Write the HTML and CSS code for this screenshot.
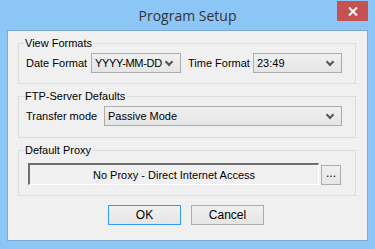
FILE: index.html
```html
<!DOCTYPE html>
<html lang="en">
<head>
  <meta charset="UTF-8">
  <title>Program Setup</title>
  <link rel="stylesheet" href="styles.css">
</head>
<body>
  <div class="window">
    <div class="titlebar">
      <span class="title">Program Setup</span>
      <button class="close" aria-label="Close">
        <svg width="10" height="9" viewBox="0 0 10 9"><path d="M1 0.5 L9 8.5 M9 0.5 L1 8.5" stroke="#fff" stroke-width="2"/></svg>
      </button>
    </div>

    <div class="client">
      <fieldset class="group g-view">
        <legend>View Formats</legend>
        <div class="row">
          <label class="lbl lbl-date">Date Format</label>
          <div class="combo w-date"><span>YYYY-MM-DD</span><i class="chev"></i></div>
          <label class="lbl lbl-time">Time Format</label>
          <div class="combo w-time"><span>23:49</span><i class="chev"></i></div>
        </div>
      </fieldset>

      <fieldset class="group g-ftp">
        <legend>FTP-Server Defaults</legend>
        <div class="row">
          <label class="lbl lbl-mode">Transfer mode</label>
          <div class="combo w-mode"><span>Passive Mode</span><i class="chev"></i></div>
        </div>
      </fieldset>

      <fieldset class="group g-proxy">
        <legend>Default Proxy</legend>
        <div class="row">
          <div class="proxy">No Proxy - Direct Internet Access</div>
          <button class="dots">...</button>
        </div>
      </fieldset>

      <div class="buttons">
        <button class="btn default">OK</button>
        <button class="btn">Cancel</button>
      </div>
    </div>
  </div>
</body>
</html>
```

FILE: styles.css
```css
body {
  margin: 0;
  font-family: "Liberation Sans", Arial, sans-serif;
  font-size: 11px;
  color: #000;
}

.window {
  width: 375px;
  height: 249px;
  background: #8cc6f7;
  box-sizing: border-box;
  padding: 0 7px;
  display: flex;
  flex-direction: column;
}

.titlebar {
  height: 30px;
  display: flex;
  align-items: center;
  justify-content: center;
  position: relative;
}

.title {
  font-family: "Open Sans", sans-serif;
  font-size: 14px;
  color: #333;
  margin-top: 1px;
}

.close {
  position: absolute;
  right: 0;
  top: 1px;
  width: 31px;
  height: 20px;
  border: none;
  padding: 0;
  background: #c75050;
  display: flex;
  align-items: center;
  justify-content: center;
}

.client {
  height: 211px;
  box-sizing: border-box;
  background: #f0f0f0;
  border: 1px solid #7ea9d3;
  padding: 5px 11px 0 10px;
}

.group {
  margin: 0 0 5px 0;
  border: 1px solid #dcdcdc;
  padding: 0 0 0 7px;
  min-width: 0;
}

.group legend {
  padding: 0 2px 0 0;
  line-height: 14px;
  height: 14px;
  margin-left: -1px;
}

.g-view .row { padding: 3px 0 10px 0; }
.g-ftp .row { padding: 3px 0 11px 0; }
.g-proxy .row { padding: 6px 0 10px 2px; }

.row {
  display: flex;
  align-items: center;
}

.lbl { white-space: nowrap; flex-shrink: 0; }
.lbl-date { width: 65px; }
.lbl-time { width: 65px; margin-left: 7px; }
.lbl-mode { width: 78px; }

.combo {
  height: 20px;
  flex-shrink: 0;
  white-space: nowrap;
  box-sizing: border-box;
  border: 1px solid #acacac;
  background: linear-gradient(#f0f0f0, #e5e5e5);
  display: flex;
  align-items: center;
  justify-content: space-between;
  padding: 0 5px 0 3px;
}

.w-date { width: 90px; letter-spacing: -0.3px; }
.w-time { width: 89px; }
.w-mode { width: 238px; }

.chev {
  width: 4px;
  height: 4px;
  border-right: 2px solid #555;
  border-bottom: 2px solid #555;
  transform: rotate(45deg);
  margin-top: -3px;
  margin-right: 3px;
}

.proxy {
  width: 291px;
  height: 22px;
  box-sizing: border-box;
  border-top: 2px solid #6d6d6d;
  border-left: 2px solid #6d6d6d;
  border-right: 1px solid #fff;
  border-bottom: 1px solid #fff;
  background: #f0f0f0;
  display: flex;
  align-items: center;
  justify-content: center;
}

.dots {
  width: 20px;
  height: 20px;
  margin-left: 2px;
  margin-top: 2px;
  border: 1px solid #acacac;
  background: linear-gradient(#f0f0f0, #e5e5e5);
  padding: 0 0 4px 0;
  font-family: inherit;
  font-size: 12px;
  line-height: 10px;
}

.buttons {
  display: flex;
  justify-content: center;
  gap: 10px;
  margin-top: 9px;
  padding-right: 2px;
}

.btn {
  width: 73px;
  height: 20px;
  box-sizing: border-box;
  border: 1px solid #acacac;
  background: linear-gradient(#f0f0f0, #e5e5e5);
  font-family: inherit;
  font-size: 12px;
  padding: 0;
}

.btn.default {
  border-color: #3399ff;
}
```
